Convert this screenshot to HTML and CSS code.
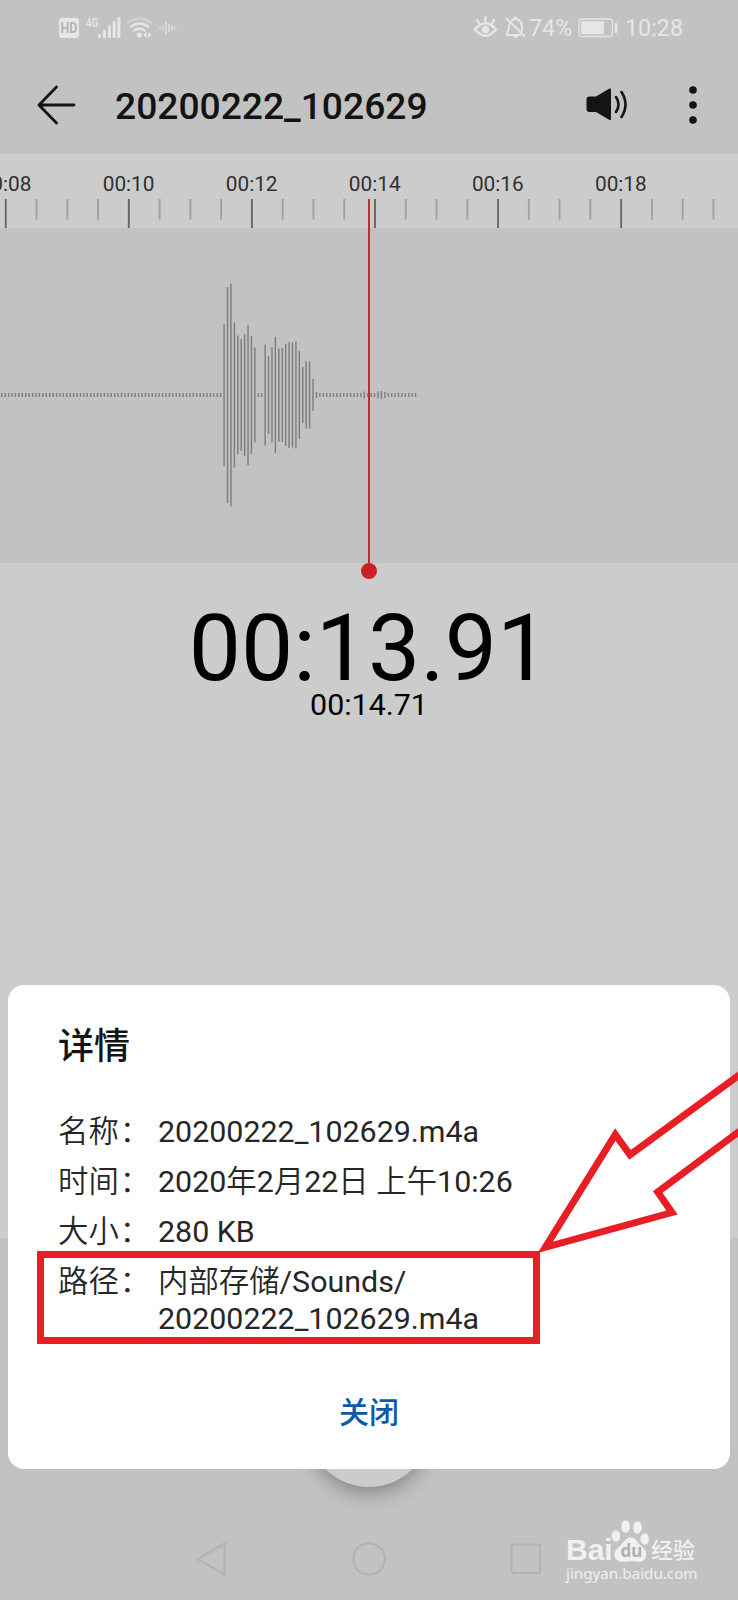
FILE: index.html
```html
<!DOCTYPE html>
<html lang="zh-CN">

<head>
    <meta charset="utf-8" />
    <title>20200222_102629</title>
    <link rel="stylesheet" href="styles.css">
</head>

<body>
    <div class="phone">
        <div class="status">
            <svg class="status-left" width="122" height="28" viewBox="58 14 122 28">
                <rect x="59" y="18" width="20" height="20" rx="3" />
                <text class="hd" x="60.6" y="32.8" textLength="16.8" lengthAdjust="spacingAndGlyphs">HD</text>
                <text class="net" x="86" y="27" textLength="12" lengthAdjust="spacingAndGlyphs">4G</text>
                <rect x="98" y="34" width="3" height="4" rx="1" />
                <rect x="103" y="30" width="3" height="8" rx="1" />
                <rect x="108" y="25.500" width="3" height="12.500" rx="1" />
                <rect x="112.700" y="21" width="3" height="17" rx="1" />
                <rect x="117.400" y="17" width="3" height="21" rx="1" />
                <path class="line faint" d="M128 22.500Q139.500 14.500 151 22.500" />
                <path class="line" d="M131 26.500Q139.500 20.500 148 26.500" />
                <path class="line" d="M134.500 30.500Q139.500 27 144.500 30.500" />
                <circle cx="139.300" cy="35" r="2.500" />
                <path d="M143.500 35l3.300-3v6zM151.500 35l-3.300-3v6z" />
                <path class="thin" d="M160 27v2M163 25.500v5M166 21.500v13M169 24v8M172 25.500v5M175 27v2M178 27.500v1" />
            </svg>
            <div class="status-right">
                <svg width="54" height="24" viewBox="473 16 54 24">
                    <path class="line" d="M475 29.500Q485.500 17 496 29.500Q485.500 42 475 29.500zM477 20l2 3.500M485.300 17.500v4M494 20l-2 3.500" />
                    <circle cx="485.500" cy="29.500" r="3.700" />
                    <path class="line thinner" d="M506.500 18.500l18 17.500M511.500 21q-3 3-3 9l-2 5h14M512.500 20l2-1v-1.500h1.500v1.500q6 1.500 6 8v4" />
                    <path d="M513 36h5q-2.500 4-5 0z" />
                </svg>
                <span class="percent">74%</span>
                <svg class="battery" width="41" height="20" viewBox="0 0 41 20">
                    <rect class="outline" x="1" y="1" width="33.500" height="17.500" rx="3" />
                    <rect x="3" y="3.300" width="23" height="13" rx="1" />
                    <rect x="36.800" y="5" width="2.600" height="10" rx="1" />
                </svg>
                <span class="clock">10:28</span>
            </div>
        </div>

        <div class="header">
            <svg class="back" width="40" height="40" viewBox="0 0 40 40">
                <path d="M38 20H3M20.500 2L3 20L20.500 38" />
            </svg>
            <h1>20200222_102629</h1>
            <svg class="speaker" width="44" height="36" viewBox="0 0 44 36">
                <path d="M2 9.500h8L23.500 1.500q1.500-.5 1.500 1V32q0 1.500-1.500 1L10 25H3.500Q.5 25 .5 22V12.500Q.5 9.500 3.500 9.500z" />
                <path class="wave-line" d="M30 10q5 7.500 0 15M35.500 5q8 12.500 0 25" />
            </svg>
            <svg class="more" width="10" height="40" viewBox="0 0 10 40">
                <circle cx="5" cy="5" r="3.800" />
                <circle cx="5" cy="20" r="3.800" />
                <circle cx="5" cy="35" r="3.800" />
            </svg>
        </div>

        <div class="ruler">
            <div class="labels">
                <span>00:08</span>
                <span>00:10</span>
                <span>00:12</span>
                <span>00:14</span>
                <span>00:16</span>
                <span>00:18</span>
            </div>
            <svg class="ticks" width="738" height="29"></svg>
        </div>
        <svg class="wave" width="738" height="335"></svg>
        <div class="playhead"></div>

        <div class="timer">
            <div class="now">00:13.91</div>
            <div class="total">00:14.71</div>
        </div>

        <div class="controls">
            <div class="play"></div>
            <div class="nav">
                <svg width="36" height="36" viewBox="0 0 36 36">
                    <path d="M30.500 2.500v31L3.500 18z" />
                </svg>
                <svg width="36" height="36" viewBox="0 0 36 36">
                    <circle cx="18" cy="18" r="15.700" />
                </svg>
                <svg width="36" height="36" viewBox="0 0 36 36">
                    <rect x="3.500" y="3.500" width="28.500" height="28.500" rx="1" />
                </svg>
            </div>
        </div>
    </div>

    <div class="dialog">
        <h2>详情</h2>
        <dl>
            <dt>名称<span>：</span></dt>
            <dd>20200222_102629.m4a</dd>
            <dt>时间<span>：</span></dt>
            <dd>2020年2月22日 上午10:26</dd>
            <dt>大小<span>：</span></dt>
            <dd>280 KB</dd>
            <dt>路径<span>：</span></dt>
            <dd>内部存储/Sounds/<br>20200222_102629.m4a</dd>
        </dl>
        <div class="close">关闭</div>
    </div>

    <div class="mark-box"></div>
    <svg class="mark-arrow" width="208" height="200" viewBox="530 1060 208 200">
        <path d="M742 1073L630 1154.800L615.300 1134.500L545.300 1247.300L672 1212.500L657.700 1192L742 1129.500" />
    </svg>

    <div class="watermark">
        <div class="logo">
            <span class="bai">Bai</span>
            <svg width="38" height="44" viewBox="0 0 38 44">
                <ellipse cx="5" cy="17" rx="4.300" ry="5.800" />
                <ellipse cx="14.500" cy="7.500" rx="4.300" ry="6.300" />
                <ellipse cx="26.500" cy="8.500" rx="4.300" ry="6.300" />
                <ellipse cx="33.700" cy="20" rx="4.300" ry="5.800" />
                <path d="M19.500 18.500c5 0 7 5 11 8.500c4 3.500 6 7 4 12c-2 4.500-7 4-10 3.500c-3.500-.5-6-.5-9.500 0c-4 .5-9 .5-11-4c-2-5 1-8 4.500-11c4-3.500 6-9 11-9z" />
                <text x="9.500" y="37.500">du</text>
            </svg>
            <span class="jy">经验</span>
        </div>
        <div class="url">jingyan.baidu.com</div>
    </div>

    <script src="script.js"></script>
</body>

</html>
```
FILE: styles.css
```css
body {
    margin: 0;
    position: relative;
    width: 738px;
    height: 1600px;
    overflow: hidden;
    background: #ccc;
    font-family: Roboto, "Noto Sans CJK SC", sans-serif;
}

svg {
    display: block;
}

.phone {
    display: flex;
    flex-direction: column;
    height: 1600px;
    position: relative;
}

/* status bar */
.status {
    height: 56px;
    background: #c2c2c2;
    display: flex;
    justify-content: space-between;
    align-items: center;
    padding: 0 55px 0 58px;
    color: #e6e6e6;
    font-size: 23.3px;
}

.status svg {
    fill: #e6e6e6;
}

.status .line {
    fill: none;
    stroke: #e6e6e6;
    stroke-width: 2.4;
    stroke-linecap: round;
    stroke-linejoin: round;
}

.status .thinner {
    stroke-width: 2;
}

.status .faint {
    stroke: #d2d2d2;
}

.status .thin {
    stroke: #dedede;
    stroke-width: 1.6;
}

.status .hd {
    font-size: 14px;
    font-weight: bold;
    fill: #b4b4b4;
}

.status .net {
    font-size: 13.5px;
    font-weight: 500;
}

.status .outline {
    fill: none;
    stroke: #e6e6e6;
    stroke-width: 1.3;
}

.status-right {
    display: flex;
    align-items: center;
}

.percent {
    margin-left: 2px;
    width: 49px;
}

.clock {
    margin-left: 6px;
}

/* title bar */
.header {
    height: 98px;
    background: #c2c2c2;
    display: flex;
    align-items: center;
    box-sizing: border-box;
    padding: 0 40px 0 36px;
}

.header h1 {
    margin: 1px 0 0 39px;
    flex: 1;
    font-size: 37.2px;
    font-weight: 500;
    color: #141414;
}

.back path {
    fill: none;
    stroke: #141414;
    stroke-width: 2.8;
    stroke-linecap: round;
    stroke-linejoin: round;
}

.speaker {
    fill: #141414;
    margin-right: 58px;
}

.speaker .wave-line {
    fill: none;
    stroke: #141414;
    stroke-width: 2.6;
    stroke-linecap: round;
}

.more {
    fill: #141414;
}

/* ruler and waveform */
.ruler {
    height: 74px;
    overflow: hidden;
}

.labels {
    display: flex;
    height: 45px;
    margin-left: -56px;
}

.labels span {
    flex: 0 0 123.070px;
    text-align: center;
    line-height: 60px;
    font-size: 20.8px;
    color: #303030;
}

.wave {
    background: #c2c2c2;
}

.wave rect {
    fill: #7c7c7c;
}

.playhead {
    position: absolute;
    left: 368px;
    top: 199px;
    width: 2px;
    height: 364px;
    background: #c22d32;
}

.playhead::after {
    content: "";
    position: absolute;
    left: -7px;
    top: 364px;
    width: 16px;
    height: 16px;
    border-radius: 50%;
    background: #cb2026;
}

.timer {
    height: 675px;
    box-sizing: border-box;
    padding-top: 46px;
    text-align: center;
    color: #000;
}

.now {
    font-size: 93px;
    line-height: 80px;
}

.total {
    font-size: 30.4px;
    line-height: 31px;
}

/* bottom area */
.controls {
    flex: 1;
    background: #c2c2c2;
    display: flex;
    flex-direction: column;
    align-items: center;
}

.play {
    margin-top: 125px;
    width: 124px;
    height: 124px;
    border-radius: 50%;
    background: #ccc;
    box-shadow: 0 10px 20px -4px rgba(0, 0, 0, 0.33);
}

.nav {
    width: 350px;
    margin-top: 54px;
    display: flex;
    justify-content: space-between;
}

.nav svg {
    fill: none;
    stroke: #b3b3b3;
    stroke-width: 2.2;
    stroke-linejoin: round;
}

/* details dialog */
.dialog {
    position: absolute;
    left: 8px;
    top: 985px;
    width: 722px;
    height: 484px;
    box-sizing: border-box;
    padding: 35px 50px 0;
    border-radius: 16px;
    background: #fff;
    color: #262626;
}

.dialog h2 {
    margin: 0;
    font-size: 36px;
    line-height: 54px;
    font-weight: 500;
    color: #141414;
}

.dialog dl {
    margin: 39px 0 0;
    display: grid;
    grid-template-columns: 100px 1fr;
    row-gap: 13px;
    font-family: Roboto, "Noto Sans CJK SC DemiLight", "Noto Sans CJK SC Light", "Noto Sans CJK SC", sans-serif;
    font-size: 30.4px;
    line-height: 37px;
}

.dialog dt,
.dialog dd {
    margin: 0;
    white-space: nowrap;
}

.dialog dt {
    font-weight: 300;
}

.dialog dt span {
    margin-left: 1px;
}

.close {
    margin-top: 54px;
    text-align: center;
    font-size: 30px;
    line-height: 44px;
    font-weight: 500;
    color: #0f57a8;
}

/* red annotation over the path row */
.mark-box {
    position: absolute;
    left: 37px;
    top: 1251px;
    width: 503px;
    height: 93px;
    box-sizing: border-box;
    border: 7px solid #e81e25;
}

.mark-arrow {
    position: absolute;
    left: 530px;
    top: 1060px;
}

.mark-arrow path {
    fill: none;
    stroke: #e81e25;
    stroke-width: 7;
    stroke-miterlimit: 10;
}

.watermark {
    position: absolute;
    left: 566px;
    top: 1520px;
    color: #f0f0f0;
}

.logo {
    display: flex;
    align-items: flex-end;
    height: 43px;
}

.logo svg {
    fill: #f0f0f0;
}

.logo text {
    font: bold 17px "Noto Sans", sans-serif;
    fill: #b0b0b0;
}

.bai {
    font: bold 30px/27px "Liberation Sans", sans-serif;
    width: 45px;
}

.jy {
    margin-left: 2px;
    font-size: 22px;
    line-height: 25px;
    font-weight: 500;
}

.url {
    font: 15.2px/20px "Noto Sans", sans-serif;
}
```
FILE: script.js
```js
const NS = "http://www.w3.org/2000/svg"

function addRect(svg, x, y, w, h, color) {
    const r = document.createElementNS(NS, "rect")
    r.setAttribute("x", x)
    r.setAttribute("y", y)
    r.setAttribute("width", w)
    r.setAttribute("height", h)
    if (color) r.setAttribute("fill", color)
    svg.append(r)
}

// ruler: a long tick every 2 seconds, short ones every half
const ticks = document.querySelector(".ticks")
for (let i = 0; i < 24; i++) {
    const x = 4.8 + i * 30.77
    if (i % 4 == 0) {
        addRect(ticks, x, 0, 1.9, 29, "#666")
    } else {
        addRect(ticks, x, 0, 1.9, 20.5, "#a0a0a0")
    }
}

// waveform
const levels = new Array(122).fill(4)
const voice = [142, 216, 223, 145, 119, 112, 122, 140, 118, 95, 4, 4,
    101, 78, 95, 116, 93, 94, 102, 106, 105, 107, 88, 56, 67, 67, 32, 6]
voice.forEach((v, i) => levels[65 + i] = v)
levels[106] = 7
levels[110] = 7
levels[111] = 8
levels[112] = 6

const wave = document.querySelector(".wave")
levels.forEach((h, i) => {
    addRect(wave, 1.1 + i * 3.42, 167 - h / 2, 1.4, h)
})
```
